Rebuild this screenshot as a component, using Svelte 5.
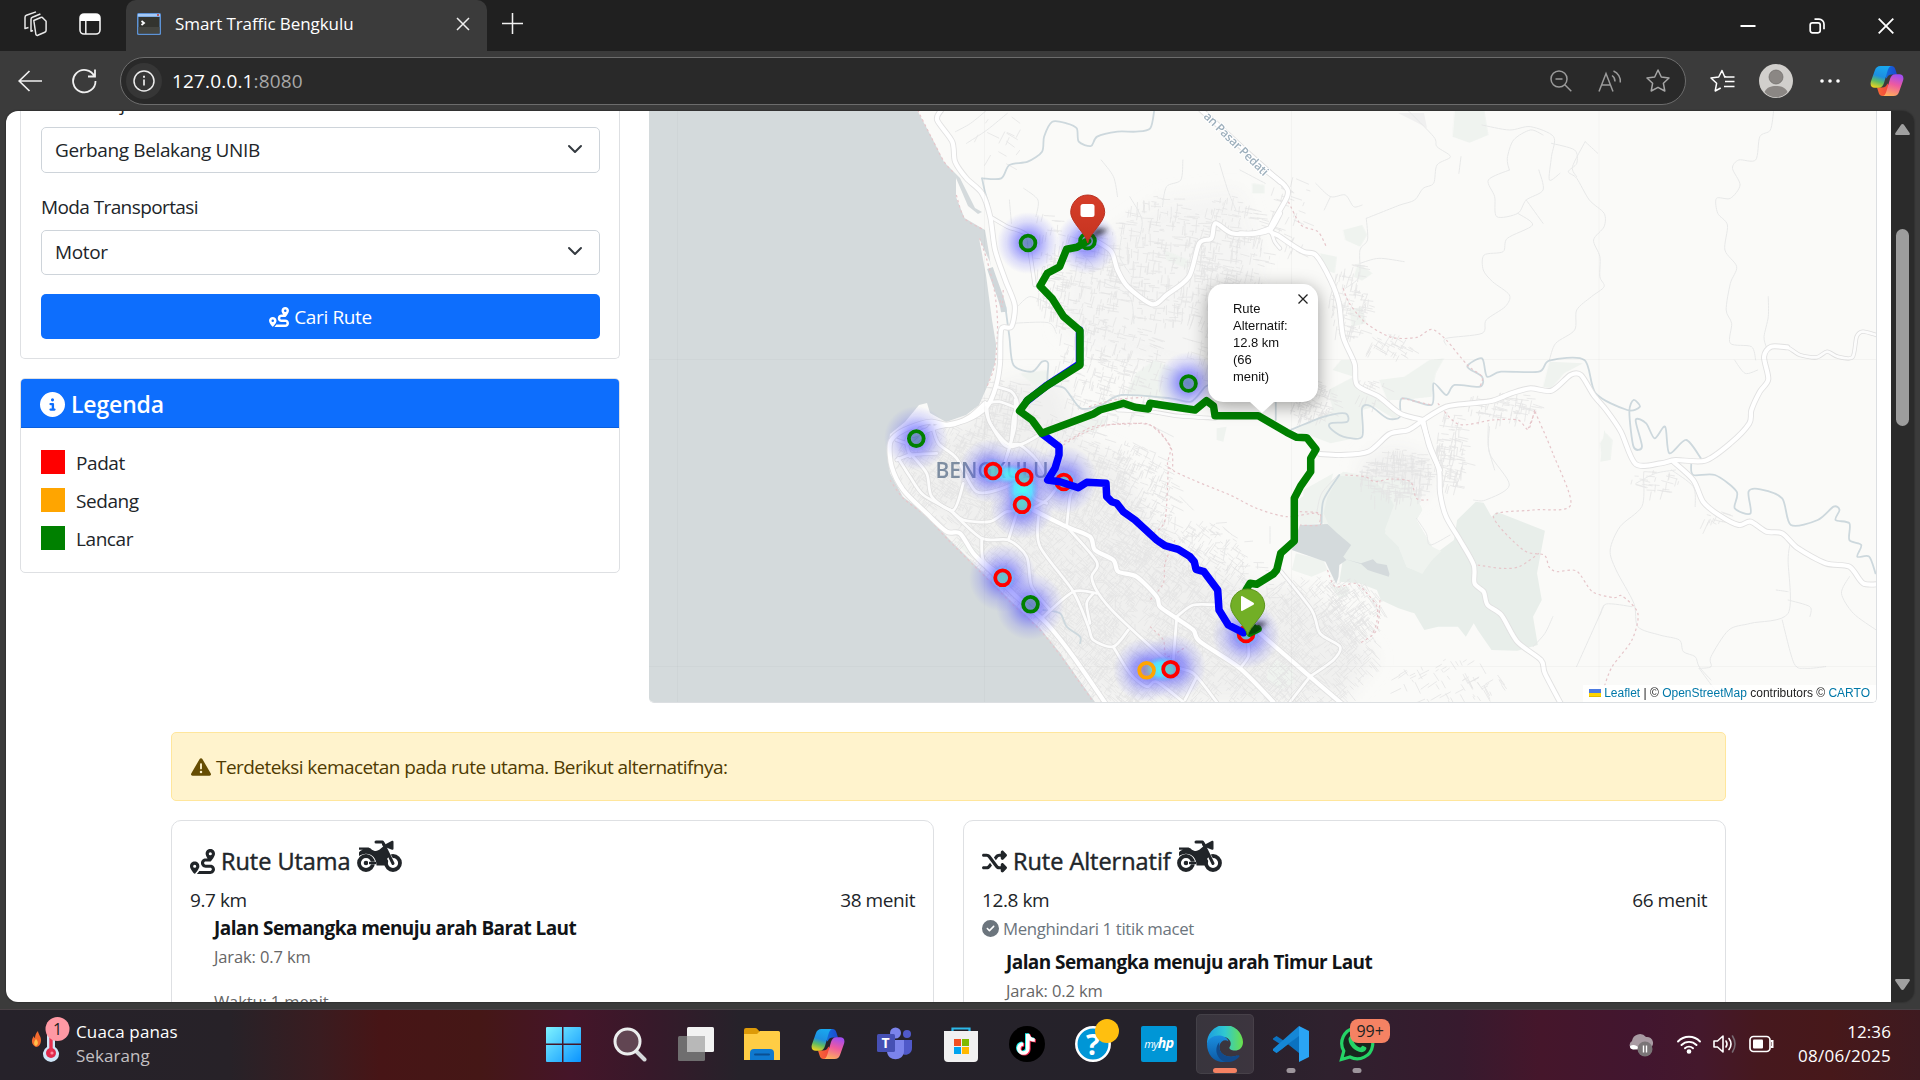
<script>
  // Deterministic generator so that the small residential streets are stable between renders.
  function rng(seed) {
    let s = seed;
    return () => {
      s = (s * 1664525 + 1013904223) % 4294967296;
      return s / 4294967296;
    };
  }

  // Area of fine streets: [centre x, centre y, radius x, radius y, angle in degrees, count]
  const districts = [
    [980, 520, 75, 75, 40, 640], [1060, 560, 90, 90, 42, 900], [1130, 620, 100, 80, 38, 900],
    [1200, 670, 120, 45, 40, 700], [1310, 640, 65, 65, 48, 700], [1030, 470, 90, 60, 20, 560],
    [940, 460, 45, 40, 30, 260], [1130, 500, 45, 60, 25, 400], [1200, 580, 50, 60, 35, 400],
    [1000, 410, 32, 32, 10, 170], [1110, 370, 55, 55, 15, 260], [1080, 285, 40, 55, 10, 260],
    [1160, 260, 55, 65, 5, 320], [1230, 250, 40, 55, 12, 200], [1230, 330, 50, 60, 15, 220],
    [1350, 300, 20, 38, 12, 110], [1395, 475, 36, 26, 5, 260], [1450, 450, 14, 40, 10, 120],
    [1500, 405, 35, 14, 12, 80], [1310, 400, 25, 20, 20, 110], [1375, 390, 20, 16, 20, 20],
    [1450, 680, 55, 22, 60, 70], [1350, 610, 32, 32, 55, 150], [1390, 345, 25, 12, 30, 40],
    [1655, 480, 25, 12, 10, 30], [1715, 517, 12, 6, 20, 18], [1290, 215, 22, 40, 20, 40],
    [1000, 150, 25, 40, 30, 14], [1045, 260, 18, 50, 8, 50], [1130, 590, 140, 85, 0, 160]
  ];

  function streets(list) {
    const r = rng(11);
    let d = '';
    for (const [cx, cy, rx, ry, ang, n] of list) {
      for (let i = 0; i < n; i++) {
        const t = r() * Math.PI * 2;
        const k = Math.sqrt(r());
        const x = cx + Math.cos(t) * rx * k;
        const y = cy + Math.sin(t) * ry * k;
        const a = ((ang + (r() > 0.5 ? 90 : 0) + (r() - 0.5) * 14) * Math.PI) / 180;
        const l = 3 + r() * 11;
        d += `M${x.toFixed(1)} ${y.toFixed(1)}l${(Math.cos(a) * l).toFixed(1)} ${(Math.sin(a) * l).toFixed(1)}`;
      }
    }
    return d;
  }
  const streetPath = streets(districts);

  // Catmull-Rom curve through "x y x y ..." points
  function curve(text) {
    const n = text.trim().split(/\s+/).map(Number);
    const p = [];
    for (let i = 0; i < n.length; i += 2) p.push([n[i], n[i + 1]]);
    let d = `M${p[0]}`;
    for (let i = 0; i < p.length - 1; i++) {
      const a = p[i - 1] ?? p[i], b = p[i], c = p[i + 1], e = p[i + 2] ?? c;
      d += `C${b[0] + (c[0] - a[0]) / 7} ${b[1] + (c[1] - a[1]) / 7} ${c[0] - (e[0] - b[0]) / 7} ${c[1] - (e[1] - b[1]) / 7} ${c[0]} ${c[1]}`;
    }
    return d;
  }

  // Map sheets: each keeps its own grid and is placed by a matrix
  const sheets = [
    {
      m: 'matrix(.40816 0 0 .33333 640 110)',
      green: ['1190 850 1215 790 1260 750 1320 780 1360 840 1340 880', '930 790 1000 780 1000 820 980 840', '1285 420 1345 450 1340 475 1290 450', '1060 930 1110 915 1150 925 1120 960 1080 970', '1500 220 1530 225 1530 250 1500 250'],
      river: ['838 205 885 205 905 165 950 155 985 125 990 80 1010 35 1045 40 1070 55 1075 95 1105 108 1120 80 1170 65 1215 65 1250 55 1260 0', '838 205 845 245 855 285', '895 590 905 680 915 765 960 785 985 755 1000 760 1000 820 1040 835 1080 895 1130 885 1180 855 1300 865 1350 875 1385 830 1400 825'],
      road: ['738 0 728 30 765 95 772 155 800 205 838 250 858 320 870 420 895 510 918 585 910 650 885 658 882 760 872 830 850 890 800 930 730 950 670 975', '1120 395 1155 425 1170 480 1195 530 1255 583 1290 555 1345 500 1370 400 1400 385 1410 340 1450 370 1510 370 1545 358 1568 310', '1375 0 1420 50 1490 130 1568 215'],
      road2: ['858 320 900 350 948 375 957 440 967 525', '872 830 910 845 925 880 915 920 908 1000 890 1070', '850 890 855 930 880 985 900 1010 940 1000 985 970', '850 880 880 875 925 895', '1170 900 1250 905 1320 918 1410 925', '1545 358 1555 395 1568 415'],
      thin: ['773 65 810 40 850 0', '800 100 850 60 900 10', '1130 150 1160 200 1170 260', '940 235 975 270 970 320', '905 270 910 340', '925 590 955 560 1000 580', '1330 150 1325 210 1290 230 1280 290', '1180 380 1175 440 1200 490', '1090 440 1110 470 1105 520', '910 640 1000 638 1020 670', '1140 520 1200 560 1210 640', '1200 260 1230 330 1220 400', '1420 160 1440 240 1460 300'],
      admin: ['680 0 715 85 745 155 770 190', '775 255 795 325 840 358', '832 385 850 450 868 540 876 640 870 760 850 830', '890 540 887 590 880 560', '1000 1000 1050 990 1110 950 1200 942 1250 945 1300 1010 1305 1080', '1100 890 1160 870 1230 862']
    },
    {
      m: 'matrix(.42092 0 0 .33333 1240 110)',
      green: ['330 810 390 800 450 750 485 745 465 790 455 860 385 870 350 870', '220 780 240 750 270 750 275 830 330 870 380 905 370 930 320 890 290 900 290 980 215 1000 130 960 220 900 210 840 270 800', '510 0 580 0 590 75 545 98 505 80', '720 830 735 755 815 760 770 790 740 835', '245 360 290 345 302 375 285 410 250 390', '280 460 315 490 290 512 270 500', '260 600 290 590 300 640 265 650', '190 430 230 440 225 490 200 480', '870 970 885 990 880 1050 860 1050 855 1000'],
      river: ['120 960 200 920 250 910 255 935 215 940 215 955 245 980 290 980 290 895 310 888 350 925 380 920 385 865 455 885 460 820 490 855 510 825 570 830 575 800 540 770 575 745 587 800 620 785 710 785 735 752 818 750 845 850 920 900 950 890 935 870 925 905 935 1010 955 1010 940 930 965 940 985 985 1010 950 1020 1030 1060 990 1095 1045', '85 860 85 930'],
      road: ['60 180 105 225 112 260 72 355 95 380 150 425 180 435 215 510 235 580 245 680 272 760 278 825 330 860 380 910 435 930', '0 370 35 370 72 355', '435 930 490 890 550 880 600 872 645 850 690 835 740 842 785 795 810 795 840 855 870 900 905 965 940 1062 1000 1060 1035 1050 1105 1052 1165 1000 1210 940 1215 900 1235 845 1255 808 1245 740 1262 710 1300 712', '435 930 400 960 355 972 305 1025 240 1035 190 1032', '435 930 450 1010 475 1080'],
      road2: ['1262 710 1300 712 1330 735 1370 742 1395 725 1420 740 1455 742 1465 680 1480 665 1512 675'],
      thin: ['398 0 460 80 468 110 500 140 468 165 460 220 435 235 415 270 380 285 330 310 300 325', '525 140 520 190', '300 325 303 390 285 420 283 500 250 535', '640 180 635 145 650 90 690 60 720 75', '575 45 640 60 690 50 745 80 740 140 735 210 760 190', '640 180 590 210 605 260 610 320 660 310 680 270 720 240 710 180', '680 270 720 340', '820 95 850 130', '740 100 795 120 800 160 780 185 800 205 830 270 865 310 865 350 840 390 855 440 855 500 865 530 835 560 800 600 795 660 750 700 735 750', '660 310 695 345 635 385 625 425 580 435 578 480 600 515 640 555 630 590 585 630 575 670 490 685 490 705', '1268 0 1260 60 1235 80 1225 150 1185 150 1170 175 1188 225 1165 265 1132 265 1135 310 1158 345 1152 420 1180 470 1165 520 1155 600 1168 640 1165 700 1215 710 1225 750', '1255 560 1255 620 1245 680 1250 710', '1175 750 1200 790 1230 780', '180 220 215 260 250 255 270 290 290 285', '215 260 200 300', '285 460 330 445 390 455', '590 940 590 1010 605 1080', '820 95 790 170 800 200', '0 180 60 220'],
      admin: ['115 275 145 345 185 365 205 410', '245 535 260 580 300 640 360 682 420 682 455 658 490 690 540 765 575 800 570 830', '385 865 455 885', '470 880 520 943 600 930 660 930 685 958 700 900']
    },
    {
      m: 'matrix(.33333 0 0 .33333 860 400)',
      green: ['1225 800 1250 780 1300 810 1300 850 1260 870 1220 840', '1070 85 1100 80 1090 125 1070 120', '280 420 340 440 360 460 330 470', '1330 270 1420 220 1400 290 1330 330'],
      river: ['550 630 600 640 620 680 660 710 660 730'],
      road: ['375 10 330 50 270 75 215 65 170 75 115 100 90 130 95 200 130 270 200 340 260 395 300 400 340 460 400 520 470 590 560 670 640 770 740 915', '520 330 620 380 690 410 705 450 760 480 775 515 830 530 890 590 900 620 950 655 1000 690 1020 725 1140 805 1240 906', '1200 700 1350 830 1450 915'],
      road2: ['375 20 390 70 440 130 480 135 530 180 570 250', '465 0 465 80 440 170', '215 70 235 130 290 175 350 275 440 260 500 220', '110 180 150 165 230 160', '115 175 150 230 190 285 270 330 310 360 390 365 440 335 500 330 560 300 600 250', '150 160 200 220 215 290 280 330 310 250', '270 330 365 415 445 420 500 470 515 560 570 630', '365 415 370 480 420 520', '535 350 540 440 640 575 685 680 700 720 760 740 805 690', '620 380 710 485 695 530 715 580 770 645 930 790 1000 820 1070 906', '550 650 640 575 710 580', '950 655 940 780', '950 650 1000 615 1075 615', '1350 830 1290 906', '1350 830 1420 780 1440 740 1380 700 1355 630 1260 510', '445 420 470 340', '620 380 630 290 640 270', '700 580 680 610 690 670', '760 740 810 820 860 860 890 845 970 906', '1140 805 1165 770 1165 730', '1010 830 975 900', '170 80 140 120 150 170', '500 220 520 290 560 310', '110 120 160 130 210 80'],
      thin: ['1230 380 1230 430', '1370 340 1385 280 1435 225', '880 80 940 110', '1100 420 1090 480', '960 290 1000 330'],
      admin: ['610 135 660 105 740 75 870 75 930 140 925 200 1000 240 1110 285 1190 325 1280 350 1370 340 1380 375 1320 375', '925 200 915 360 880 400', '945 420 915 490 910 550 870 600', '870 680 910 720 920 770 980 740', '1560 600 1550 690 1500 730', '90 240 130 295 200 350 260 415 340 495 400 555 470 625 540 690 600 765 650 835 700 906']
    },
    {
      m: 'matrix(.39541 0 0 .33333 1280 400)',
      green: ['42 300 120 250 160 215 215 225 330 245 360 330 345 360 385 440 400 470 360 520 320 500 170 470 110 370 50 375', '40 460 110 480 120 510 80 530 30 510', '130 560 175 560 170 590 150 595', '820 90 835 130 835 180 810 185'],
      forest: ['110 340 120 290 150 228 210 230 250 255 290 310 265 390 300 440 320 500 360 520 400 455 440 420 448 360 495 305 515 308 535 350 548 335 670 392 650 520 662 600 640 650 652 735 600 752 535 750 500 690 490 670 470 710 450 680 400 680 365 690 340 640 300 625 255 600 245 570 200 550 150 545 160 470'],
      light: ['245 246 330 245 360 330 345 360 385 440 408 454 375 490 360 522 320 500 300 440 265 400 290 320 265 262'],
      lake: ['50 375 120 372 145 400 180 435 160 470 168 480 150 495 148 530 142 552 125 510 115 485 30 450', '165 478 205 490 235 478 245 490 270 495 277 522 275 530 235 515 222 510 205 492'],
      river: ['1040 190 1045 225 1100 225 1155 275 1150 325 1190 340 1185 275 1215 268 1270 295 1292 375 1360 360 1400 320 1415 330 1405 360 1440 370 1440 420 1470 435 1460 470 1490 470 1506 520', '105 370 110 300 150 225'],
      road: ['360 65 380 140 402 210 405 280 420 350 455 420 490 495 492 550 515 575 525 615 560 645 600 725 660 780 670 820 712 915', '995 185 1045 240 1070 305 1110 345 1160 375 1190 365 1230 395 1270 400 1310 445 1380 490 1440 500 1475 550 1520 552'],
      road2: [],
      thin: ['1000 210 950 220 900 250', '920 240 915 320 860 380 835 450 850 510 895 610 905 680 960 705 1010 720 1020 755 1050 770 1060 800 1090 840', '990 210 1045 260 1050 320', '810 645 825 612 890 620', '750 800 820 615', '640 740 670 700 690 650', '1290 430 1285 480 1285 640 1190 670 1135 690 1090 770 1090 800 1060 805', '1285 600 1340 620 1340 650', '1270 660 1300 790 1330 805 1380 800', '1440 530 1420 580 1450 640 1508 690', '345 355 370 400 380 435 430 405', '530 80 530 160 580 255 520 300 490 300', '1060 805 1100 870', '1255 570 1285 575'],
      admin: ['645 35 690 160 735 315 640 330 540 348 615 450 668 465 680 500 700 515 750 513 790 575 845 593 865 588 905 640 890 720 840 800 820 860', '500 495 560 505 605 500 655 460', '165 225 215 230 240 245 280 237 330 245 345 295 375 300', '120 510 140 560 190 550 220 580 245 620 245 665 235 700', '645 35 628 85', '50 335 100 340 100 370']
    }
  ];

  const heat = [
    [1028, 243, 31], [1087, 243, 31], [1188, 383, 31], [916, 438, 32], [1030, 606, 34], [990, 471, 32],
    [1024, 477, 32], [1022, 507, 32], [1064, 480, 34], [1003, 578, 34], [1173, 667, 33], [1145, 670, 32], [1246, 635, 34]
  ];
  const points = [
    [1028, 243, 'green'], [1087.5, 241, 'green'], [1188.5, 383.5, 'green'], [916.3, 438.6, 'green'], [1030.5, 604.3, 'green'],
    [993, 471, 'red'], [1024.2, 477.2, 'red'], [1022, 504.8, 'red'], [1063.8, 482, 'red'], [1002.6, 577.8, 'red'],
    [1170.6, 669.2, 'red'], [1246, 634, 'red'], [1146.6, 670.3, 'orange']
  ];

  const icons = {
    route: 'M512 96c0 50.2-59.1 125.1-84.6 155c-3.8 4.4-9.4 6.1-14.5 5H320c-17.7 0-32 14.3-32 32s14.3 32 32 32h96c53 0 96 43 96 96s-43 96-96 96H139.6c8.7-9.9 19.3-22.6 30-36.8c6.3-8.4 12.8-17.6 19-27.2H416c17.7 0 32-14.3 32-32s-14.3-32-32-32H320c-53 0-96-43-96-96s43-96 96-96h39.8c-21-31.5-39.8-67.7-39.8-96c0-53 43-96 96-96s96 43 96 96zM117.1 489.1c-3.8 4.3-7.2 8.1-10.1 11.3l-1.8 2-.2-.2c-6 4.6-14.6 4-20-1.8C59.8 473 0 402.5 0 352c0-53 43-96 96-96s96 43 96 96c0 30-21.1 67-43.5 97.9c-10.7 14.7-21.7 28-30.8 38.5l-.6 .7zM128 352a32 32 0 1 0 -64 0 32 32 0 1 0 64 0zM416 128a32 32 0 1 0 0-64 32 32 0 1 0 0 64z',
    shuffle: 'M403.8 34.4c12-5 25.7-2.2 34.9 6.9l64 64c6 6 9.4 14.1 9.4 22.6s-3.4 16.6-9.4 22.6l-64 64c-9.2 9.2-22.9 11.9-34.9 6.9s-19.8-16.6-19.8-29.6V160H352c-10.1 0-19.6 4.7-25.6 12.8L284 229.3 244 176l31.2-41.6C293.3 110.2 321.8 96 352 96h32V64c0-12.9 7.8-24.6 19.8-29.6zM164 282.7L204 336l-31.2 41.6C154.7 401.8 126.2 416 96 416H32c-17.7 0-32-14.3-32-32s14.3-32 32-32H96c10.1 0 19.6-4.7 25.6-12.8L164 282.7zm274.6 188c-9.2 9.2-22.9 11.9-34.9 6.9s-19.8-16.6-19.8-29.6V416H352c-30.2 0-58.7-14.2-76.8-38.4L121.6 172.8c-6-8.1-15.5-12.8-25.6-12.8H32c-17.7 0-32-14.3-32-32s14.3-32 32-32H96c30.2 0 58.7 14.2 76.8 38.4L326.4 339.2c6 8.1 15.5 12.8 25.6 12.8h32V320c0-12.9 7.8-24.6 19.8-29.6s25.7-2.2 34.9 6.9l64 64c6 6 9.4 14.1 9.4 22.6s-3.4 16.6-9.4 22.6l-64 64z',
    check: 'M256 512A256 256 0 1 0 256 0a256 256 0 1 0 0 512zM369 209L241 337c-9.4 9.4-24.6 9.4-33.9 0l-64-64c-9.4-9.4-9.4-24.6 0-33.9s24.6-9.4 33.9 0l47 47L335 175c9.4-9.4 24.6-9.4 33.9 0s9.4 24.6 0 33.9z',
    info: 'M256 512A256 256 0 1 0 256 0a256 256 0 1 0 0 512zM216 336h24V272H216c-13.3 0-24-10.7-24-24s10.7-24 24-24h48c13.3 0 24 10.7 24 24v88h8c13.3 0 24 10.7 24 24s-10.7 24-24 24H216c-13.3 0-24-10.7-24-24s10.7-24 24-24zm40-208a32 32 0 1 1 0 64 32 32 0 1 1 0-64z',
    warn: 'M256 32c14.2 0 27.3 7.5 34.5 19.8l216 368c7.3 12.4 7.3 27.7 .2 40.1S486.3 480 472 480H40c-14.3 0-27.6-7.7-34.7-20.1s-7-27.8 .2-40.1l216-368C228.7 39.5 241.8 32 256 32zm0 128c-13.3 0-24 10.7-24 24V296c0 13.3 10.7 24 24 24s24-10.7 24-24V184c0-13.3-10.7-24-24-24zm32 224a32 32 0 1 0 -64 0 32 32 0 1 0 64 0z'
  };

  const legend = [['Padat', 'padat'], ['Sedang', 'sedang'], ['Lancar', 'lancar']];
</script>

{#snippet fa(name, cls)}
  <svg class={cls} viewBox="0 0 512 512" fill="currentColor"><path d={icons[name]} /></svg>
{/snippet}

{#snippet moto()}
  <svg class="moto" viewBox="0 0 45 32" fill="none" stroke="currentColor">
    <circle cx="9" cy="23" r="7" stroke-width="3.8" />
    <circle cx="9" cy="23" r="2.3" fill="currentColor" stroke="none" />
    <path d="M11 23h8" stroke="#fff" stroke-width="2.6" />
    <circle cx="36" cy="23" r="7" stroke-width="3.8" />
    <path d="M36 24 L26 6" stroke="#fff" stroke-width="5.4" />
    <path d="M36 23.5 L26.5 4" stroke-width="3" stroke-linecap="round" />
    <path d="M2 7.5h8.5c3 0 4 2.5 6.5 3.2 2.6.8 4.5-.4 6.5-2l3-2.5 6 10c-3 2.5-4.5 5.5-4.5 9.3h-8.5c0-8-6-12.5-12-11.5-2.5.3-3.5 1-5.5 2v-3.5c1-2 3-2.5 4-2.7H2z" fill="currentColor" stroke="none" />
    <path d="M19 2h6.5l1.5 2.5" stroke-width="3" stroke-linecap="round" stroke-linejoin="round" />
    <path d="M28 4.5 35 .8c1 0 1.5.4 1.5 1.2v6.5c0 1-.6 1.5-1.5 1.3L28 7z" fill="currentColor" stroke="none" />
    <path d="M12 23h7" stroke-width="2.4" />
  </svg>
{/snippet}

{#snippet copilot(cls, id)}
  <svg class={cls} viewBox="0 0 34 32">
    <defs>
      <linearGradient id="{id}a" x1=".5" y1="0" x2=".2" y2="1"><stop offset="0" stop-color="#19a7ee" /><stop offset=".45" stop-color="#1e8fe0" /><stop offset=".7" stop-color="#5fbb63" /><stop offset="1" stop-color="#f5d51c" /></linearGradient>
      <linearGradient id="{id}b" x1=".6" y1="0" x2=".3" y2="1"><stop offset="0" stop-color="#a24df0" /><stop offset=".45" stop-color="#ee5aa0" /><stop offset="1" stop-color="#ffb05a" /></linearGradient>
      <linearGradient id="{id}c"><stop offset="0" stop-color="#1272dc" /><stop offset="1" stop-color="#1b49d0" /></linearGradient>
      <linearGradient id="{id}d"><stop offset="0" stop-color="#f66a35" /><stop offset="1" stop-color="#f4413e" /></linearGradient>
    </defs>
    <path d="M17 1h4.5c2.2 0 3.3 1.3 3.9 3.5L27 9.5h-5c-3 0-4.5 1.5-5.3 4L14 10z" fill="url(#{id}c)" />
    <path d="M17 31h-4.5c-2.2 0-3.3-1.3-3.9-3.5L7 22.5h5c3 0 4.5-1.5 5.3-4L20 22z" fill="url(#{id}d)" />
    <path d="M10.5 1H22c-2.5 0-3.6 2-4.5 5l-3.5 12c-1 3-2.5 4.8-5.5 4.8H4.8c-3.5 0-5-2.6-3.8-6.5L4.8 5.5C5.7 2.5 7.5 1 10.5 1z" fill="url(#{id}a)" />
    <path d="M23.5 31H12c2.5 0 3.6-2 4.5-5L20 14c1-3 2.5-4.8 5.5-4.8h3.7c3.5 0 5 2.6 3.8 6.5l-3.8 10.8c-.9 3-2.7 4.5-5.7 4.5z" fill="url(#{id}b)" />
  </svg>
{/snippet}

<div class="screen">
  <header class="tabs">
    <svg class="workspaces" viewBox="0 0 26 26" fill="none" stroke="#e8e8e8" stroke-width="1.5" stroke-linejoin="round">
      <path d="M12 9.5 19 6.5c1-.4 1.800 0 2.3.8l3 3v9c0 1-.4 1.6-1.3 2l-7 3c-1 .4-2-.2-2-1.3z" transform="translate(-1.2 0)" /><path d="M10 19.5 8 20.3V8.5c0-1 .4-1.8 1.4-2.2l8-3.3" /><path d="M5.5 16.5 2 17.5V6.5c0-1 .4-1.8 1.4-2.2L13 .9" />
    </svg>
    <svg class="vtabs" viewBox="0 0 22 22"><rect x="1" y="1" width="20" height="20" rx="4" fill="none" stroke="#f2f2f2" stroke-width="1.6" /><path d="M1 8V5a4 4 0 0 1 4-4h12a4 4 0 0 1 4 4v3z" fill="#fff" /><path d="M6.800 8v13" stroke="#f2f2f2" stroke-width="1.5" /></svg>
    <div class="tab">
      <svg class="favicon" viewBox="0 0 24 22"><rect width="24" height="22" rx="1.5" fill="#5d93d6" /><rect x="1.5" y="4" width="21" height="16.5" fill="#33342f" /><path d="M1 1h22v2.5H1z" fill="#a5c9f5" /><circle cx="21" cy="2" r="1" fill="#c2392e" /><path d="m4.500 8 2.500 2-2.500 2" fill="none" stroke="#fff" stroke-width="1.800" /><path d="M1.5 14h21v6.5h-21z" fill="#444540" /></svg>
      <span>Smart Traffic Bengkulu</span>
      <svg class="tab-x" viewBox="0 0 14 14" stroke="#eee" stroke-width="1.5"><path d="m1 1 12 12M13 1 1 13" /></svg>
    </div>
    <svg class="plus" viewBox="0 0 22 22" stroke="#f2f2f2" stroke-width="1.6"><path d="M11 0v22M0 11h22" /></svg>
    <div class="controls">
      <svg viewBox="0 0 16 16" stroke="#fff" stroke-width="2"><path d="M.5 8h15" /></svg>
      <svg viewBox="0 0 16 16" fill="none" stroke="#fff" stroke-width="1.7"><rect x="1.2" y="4.8" width="10" height="10" rx="2.2" /><path d="M5.5 1.2H10a5 5 0 0 1 5 5v5" /></svg>
      <svg viewBox="0 0 16 16" stroke="#fff" stroke-width="1.8"><path d="m.7.7 14.6 14.6M15.3.7.7 15.3" /></svg>
    </div>
  </header>

  <div class="toolbar">
    <svg class="back" viewBox="0 0 24 22" fill="none" stroke="#f0f0f0" stroke-width="1.7"><path d="M24 11H1M11.5 1 1.2 11l10.3 10" /></svg>
    <svg class="reload" viewBox="0 0 26 26" fill="none" stroke="#f0f0f0" stroke-width="1.8"><path d="M23.5 8.5A11.2 11.2 0 1 0 24.5 13M24 1.5v7h-7" /></svg>
    <div class="address">
      <span class="site"><svg viewBox="0 0 22 22" fill="none" stroke="#ececec" stroke-width="1.5"><circle cx="11" cy="11" r="10" /><path d="M11 9.5v6" stroke-width="1.7" /><path d="M11 5.7v2" stroke-width="1.9" /></svg></span>
      <span class="url">127.0.0.1<em>:8080</em></span>
      <svg class="a1" viewBox="0 0 22 22" fill="none" stroke="#9b9b9b" stroke-width="1.5"><circle cx="9" cy="9" r="8" /><path d="M5.5 9h7M14.8 14.8 21.3 21.3" /></svg>
      <svg class="a2" viewBox="0 0 24 22" fill="none" stroke="#9b9b9b" stroke-width="1.5"><path d="M1 21.5 8 3.5l7 18M3.5 15h9M14 5.5a7 7 0 0 1 3 6M15.5 1a11 11 0 0 1 6.8 11.5" /></svg>
      <svg class="a3" viewBox="0 0 24 24" fill="none" stroke="#a5a5a5" stroke-width="1.5" stroke-linejoin="round"><path d="m12 1 3.3 7 7.7 1-5.6 5.3L18.8 22 12 18.3 5.2 22l1.4-7.7L1 9l7.7-1z" /></svg>
    </div>
    <svg class="fav" viewBox="0 0 25 24" fill="none" stroke="#fff" stroke-width="1.5" stroke-linejoin="round"><path d="M14.5 7.5 12 1.5 8.7 8 1 9l5.6 5.3L5.2 22l5.5-3M15 7.5l1 .5M15 12.5h9.5M14 8h10.5M14 17.5h10.5" /></svg>
    <svg class="avatar" viewBox="0 0 34 34"><circle cx="17" cy="17" r="17" fill="#d1cfcc" /><circle cx="17" cy="13" r="7" fill="#8b8784" stroke="#6f6c69" stroke-width=".7" /><path d="M5.5 28c2-4.5 6.5-6 11.5-6s9.5 1.5 11.5 6c-6 7-17 7-23 0z" fill="#8b8784" /></svg>
    <svg class="dots" viewBox="0 0 20 4" fill="#fff"><circle cx="2" cy="2" r="1.8" /><circle cx="10" cy="2" r="1.8" /><circle cx="18" cy="2" r="1.8" /></svg>
    {@render copilot('cop', 'ct')}
  </div>

  <main class="frame">
    <div class="page">
      <div class="top">
        <aside>
          <section class="card form">
            <label class="cut" for="tujuan">Lokasi Tujuan</label>
            <div class="select" id="tujuan"><span>Gerbang Belakang UNIB</span><svg viewBox="0 0 16 16"><path d="m2 5 6 6 6-6" fill="none" stroke="#343a40" stroke-width="2" stroke-linecap="round" stroke-linejoin="round" /></svg></div>
            <label class="moda" for="moda">Moda Transportasi</label>
            <div class="select" id="moda"><span>Motor</span><svg viewBox="0 0 16 16"><path d="m2 5 6 6 6-6" fill="none" stroke="#343a40" stroke-width="2" stroke-linecap="round" stroke-linejoin="round" /></svg></div>
            <button>{@render fa('route', 'i20')}<span>Cari Rute</span></button>
          </section>
          <section class="card legend">
            <h2>{@render fa('info', 'i24')}<span>Legenda</span></h2>
            <ul>
              {#each legend as [name, cls]}
                <li><i class={cls}></i><span>{name}</span></li>
              {/each}
            </ul>
          </section>
        </aside>

        <div class="map">
          <svg class="canvas" viewBox="649 111 1227 591">
            <defs>
              <radialGradient id="heat"><stop offset="0" stop-color="#3c3cff" stop-opacity=".6" /><stop offset=".35" stop-color="#4646ff" stop-opacity=".48" /><stop offset=".7" stop-color="#5a5aff" stop-opacity=".18" /><stop offset="1" stop-color="#6060ff" stop-opacity="0" /></radialGradient>
              <radialGradient id="cyan"><stop offset="0" stop-color="#48fff0" /><stop offset=".55" stop-color="#50ecff" stop-opacity=".8" /><stop offset="1" stop-color="#60a0ff" stop-opacity="0" /></radialGradient>
              <linearGradient id="redpin" x2="0" y2="1"><stop offset="0" stop-color="#d63e2a" /><stop offset="1" stop-color="#c5331f" /></linearGradient>
              <filter id="blur" x="-50%" y="-50%" width="200%" height="200%"><feGaussianBlur stdDeviation="2.5" /></filter>
              <filter id="soft" x="-30%" y="-30%" width="160%" height="160%"><feGaussianBlur stdDeviation="9" /></filter>
            </defs>
            <rect x="649" y="111" width="1227" height="591" fill="#fafaf8" />
            <g fill="#f0f0ef" filter="url(#soft)">
              <path d="M890 440 960 425 1010 380 1060 380 1080 440 1120 460 1150 520 1190 560 1240 580 1300 590 1345 620 1375 660 1340 702 1100 702 1000 580 900 490z" />
              <path d="M1070 260 1160 200 1240 190 1260 260 1250 390 1120 360 1060 330z" opacity=".5" /><ellipse cx="1395" cy="475" rx="36" ry="25" />
            </g>
            {#each sheets as s}
              <g transform={s.m}>
                {#each s.green as p}<polygon points={p} class="park" />{/each}
                {#each s.forest ?? [] as p}<polygon points={p} class="forest" />{/each}
                {#each s.light ?? [] as p}<polygon points={p} class="park" />{/each}
                {#each s.lake ?? [] as p}<polygon points={p} class="lake" />{/each}
              </g>
            {/each}
            <path d="M1398 113 1424 113 1427 128 1412 120z" fill="#f0f0f0" />
            <path d={streetPath} class="streets" />
            <path d="M649 111H917.6L932 138 944 162 950 168 960 178 966 190 975 208 982 212 978 214 968 206 956 178 956 197 964.5 218 985 230 989 253 994 290 997.5 323 995 363 987 387 979 405 966 415 946 422 930 413 927 403 919 405 905 422 890 434 888 450 890 473 903 497 927 515 947 537 973 563 993 583 1017 607 1040 628 1060 653 1077 677 1095 702H649z" fill="#d4dadc" />
            <path d="M979 238 986 275 992 320 997 350 1003 350 999 300 990 262z" fill="#fafaf8" />
            <path d="M990 268C997 290 1003 300 1004 312" fill="none" stroke="#d0d7da" stroke-width="6" />
            {#each sheets as s}
              <g transform={s.m} class="lines">
                {#each s.thin as p}<path d={curve(p)} class="thin" />{/each}
                {#each s.river as p}<path d={curve(p)} class="river" />{/each}
                {#each s.admin as p}<path d={curve(p)} class="admin" />{/each}
              </g>
            {/each}
            {#each sheets as s}
              <g transform={s.m} class="lines">
                {#each s.road2 as p}<path d={curve(p)} class="case2" />{/each}
                {#each s.road as p}<path d={curve(p)} class="case" />{/each}
              </g>
            {/each}
            {#each sheets as s}
              <g transform={s.m} class="lines">
                {#each s.road2 as p}<path d={curve(p)} class="road2" />{/each}
                {#each s.road as p}<path d={curve(p)} class="road" />{/each}
              </g>
            {/each}
            <path d="M677.5 111V702M984.5 111V702M1291.5 111V702M1599 111V702M649 359.5H1876M649 666.5H1876" stroke="#808080" stroke-opacity=".06" />
            <text x="935.5" y="477.5" class="city" textLength="113" lengthAdjust="spacingAndGlyphs">BENGKULU</text>
            <text transform="translate(1203 117) rotate(44.5)" class="street-name" textLength="85" lengthAdjust="spacing">an Pasar Pedati</text>

            {#each heat as [x, y, r]}<circle cx={x} cy={y} {r} fill="url(#heat)" />{/each}
            <g fill="url(#cyan)"><ellipse cx="1023" cy="489" rx="16" ry="24" /><ellipse cx="1009" cy="474" rx="19" ry="10" opacity=".8" /><ellipse cx="1162" cy="669" rx="20" ry="13" /><circle cx="1003" cy="578" r="13" opacity=".8" /><circle cx="993" cy="471" r="13" opacity=".8" /><circle cx="1022" cy="505" r="13" opacity=".8" /><circle cx="1064" cy="482" r="13" opacity=".7" /><circle cx="1246" cy="634" r="13" opacity=".7" /></g>
            {#each points as [x, y, c]}<circle cx={x} cy={y} r="7.4" fill={c === 'red' ? '#a06040' : c} fill-opacity=".22" stroke={c} stroke-width="3.8" />{/each}

            <g fill="none" stroke-width="7.5" stroke-linejoin="round" stroke-linecap="round">
              <path stroke="#00f" d="M1079.5 330V364L1046 386 1027 401" />
              <path stroke="#00f" d="M1042.7 434.3 1059 446.7V455L1055 468.3 1047.7 480 1060 481.7 1078.3 487.7 1086.7 482.3 1106 483.3 1106.7 496.7 1111.7 501.7 1116.7 503.3 1123.3 511.7 1135 520 1156.7 540 1165 545.7 1178.3 549.3 1190 556.7 1194.3 561.7 1196 569.3 1204 571.7 1217.7 590 1219 610 1228.3 625 1243.3 632.7" />
              <path stroke="green" d="M1087.5 241 1077 247.3 1066.5 249.3 1059.6 266.7 1047.3 273.3 1040 286 1052 298.3 1063.7 316.7 1080 330.7V365L1048 385 1027.7 400 1019.6 411 1032 420 1041.7 433.3 1093.3 414 1100 410 1123.3 403.3 1135 407.3 1148.3 409 1150 403.3 1195 410 1206.5 400.7 1213.5 406 1215 415.7H1258.3L1286.7 432.3 1296.7 437.3 1306.7 437.7 1316 449.3 1310.7 458.3V471.7L1300.7 486 1294.3 498.3V541L1280.7 553.3 1276.7 570 1273.3 574 1256.7 584.3 1250 583.3 1246 590M1250 633 1258 629" />
            </g>
            <path d="M1088 240 1104 233 1108 229 1096 228zM1249 633 1262 627 1268 622 1256 622z" fill="#202020" opacity=".75" filter="url(#blur)" />
            <path d="M1247 635l8-2 6-4-6-5z" fill="#064a06" />
            <path d="M1087.7 243c-1.5-9-17-21-17-30.5a17 17.5 0 0 1 34 0c0 9.5-15.5 21.5-17 30.5z" fill="url(#redpin)" stroke="#b93222" />
            <rect x="1080.500" y="204" width="14" height="13" rx="2.5" fill="#fff" />
            <path d="M1247.7 635.5c-1.5-9-17-20-17-29.5a17 17 0 0 1 34 0c0 9.5-15.5 20.5-17 29.5z" fill="#72af26" stroke="#5c941c" />
            <path d="M1241 597v13q0 1.5 1.5.8l11-6q1.3-1 0-2l-11-6.6q-1.5-.7-1.5.8z" fill="#fff" />
          </svg>
          <div class="popup">
            <p>Rute<br />Alternatif:<br />12.8 km<br />(66<br />menit)</p>
            <svg viewBox="0 0 10 10" stroke="#222" stroke-width="1.3"><path d="m.5.5 9 9M9.5.5l-9 9" /></svg>
            <i></i>
          </div>
          <div class="attribution"><svg viewBox="0 0 12 8"><path fill="#4C7BE1" d="M0 0h12v4H0z" /><path fill="#FFD500" d="M0 4h12v3H0z" /><path fill="#E0BC00" d="M0 7h12v1H0z" /></svg><a href="#l">Leaflet</a> | © <a href="#o">OpenStreetMap</a> contributors © <a href="#c">CARTO</a></div>
        </div>
      </div>

      <div class="results">
        <div class="alert">{@render fa('warn', 'i20')}<span>Terdeteksi kemacetan pada rute utama. Berikut alternatifnya:</span></div>
        <div class="routes">
          <article>
            <h3>{@render fa('route', 'i24')}<span>Rute Utama</span>{@render moto()}</h3>
            <div class="sum"><span>9.7 km</span><span>38 menit</span></div>
            <div class="step"><strong>Jalan Semangka menuju arah Barat Laut</strong><small>Jarak: 0.7 km</small><small class="time">Waktu: 1 menit</small></div>
          </article>
          <article>
            <h3>{@render fa('shuffle', 'i24')}<span>Rute Alternatif</span>{@render moto()}</h3>
            <div class="sum"><span>12.8 km</span><span>66 menit</span></div>
            <div class="avoid">{@render fa('check', 'i17')}<span>Menghindari 1 titik macet</span></div>
            <div class="step"><strong>Jalan Semangka menuju arah Timur Laut</strong><small>Jarak: 0.2 km</small></div>
          </article>
        </div>
      </div>
    </div>
    <div class="scroll">
      <svg viewBox="0 0 15 11"><path d="M7.5 0q1 0 1.6.9l5.5 8q1 2.1-1 2.1H1.400q-2 0-1-2.100l5.500-8Q6.500 0 7.500 0z" fill="#a0a0a0" /></svg>
      <div class="thumb"></div>
      <svg class="down" viewBox="0 0 15 11"><path d="M7.5 0q1 0 1.6.9l5.5 8q1 2.1-1 2.1H1.400q-2 0-1-2.100l5.500-8Q6.500 0 7.500 0z" fill="#a0a0a0" /></svg>
    </div>
  </main>

  <footer>
    <div class="weather">
      <svg viewBox="0 0 40 46">
        <path d="M5 31c-5-2-5-8-2-11 0 2 1 2 1 2 0-3 1-5 3-7 0 3 3 5 3 9 0 4-2 7-5 7z" fill="#f26a2e" /><path d="M5 30c-3-1-2-5 0-7 2 2 3 5 0 7z" fill="#ffc04a" />
        <path d="M16 12a4 4 0 0 1 8 0v19a8 8 0 1 1-8 0z" fill="#cfe6f8" /><circle cx="20" cy="37" r="5" fill="#e0294b" /><path d="M18.3 14h3.4v22h-3.4z" fill="#e8304f" /><circle cx="21" cy="37" r="1.6" fill="#ff8ba0" />
        <circle cx="26.5" cy="13" r="12" fill="#ff99a4" />
      </svg>
      <b>1</b>
      <div><span>Cuaca panas</span><span class="dim">Sekarang</span></div>
    </div>
    <nav>
      <div><svg viewBox="0 0 36 36"><defs><linearGradient id="win" x2="1" y2="1"><stop offset="0" stop-color="#7ff3ff" /><stop offset="1" stop-color="#0a93ff" /></linearGradient></defs><path d="M1 2q0-1 1-1h15v16.5H1zM18.5 1H35q1 0 1 1v15.5H18.5zM1 19h16v17H2q-1 0-1-1zM18.5 19H36v16q0 1-1 1H18.5z" fill="url(#win)" /></svg></div>
      <div><svg viewBox="0 0 36 36"><path d="m24 25 8.5 8.5" stroke="#d5d8da" stroke-width="4" stroke-linecap="round" /><circle cx="15.5" cy="15.5" r="12.5" fill="#614552" stroke="#eceeee" stroke-width="3" /></svg></div>
      <div><svg viewBox="0 0 36 36"><rect x="9" y="1" width="27" height="25" rx="1.5" fill="#f2f2f2" /><rect y="10" width="27" height="25" rx="1.5" fill="#737373" opacity=".95" /><path d="M9 10h18v16H9z" fill="#b8b8b8" /></svg></div>
      <div><svg viewBox="0 0 36 36"><path d="M0 4q0-2 2-2h9q1.5 0 2.5 1.2L16 6v5H0z" fill="#dd9a08" /><path d="M0 8h13l3-3h18.5Q36 5 36 6.5V34H0z" fill="#ffcd45" /><path d="M6 34V27q0-4 4-4h16q4 0 4 4v7z" fill="#0f79cf" /><path d="M11 28.5h14" stroke="#0b4f91" stroke-width="2" stroke-linecap="round" /></svg></div>
      <div>{@render copilot('tcop', 'cb')}</div>
      <div><svg viewBox="0 0 36 36"><circle cx="18.5" cy="7" r="5.5" fill="#7b83eb" /><circle cx="30" cy="8" r="4" fill="#5059c9" /><path d="M22 14h13v8c0 9-13 9-13 0z" fill="#5059c9" /><path d="M10 14h17v11c0 11-17 11-17 0z" fill="#7b83eb" /><rect y="8" width="18" height="18" rx="1.5" fill="#4650b4" /></svg><b class="tee">T</b></div>
      <div><svg viewBox="0 0 36 36"><path d="M9.5 9V2.5h17V9" fill="none" stroke="#2cb8e8" stroke-width="2.2" /><path d="M1 5h34v27q0 4-4 4H5q-4 0-4-4z" fill="#f1f1f1" /><path d="M11 13h7v7h-7z" fill="#f25022" /><path d="M19 13h7v7h-7z" fill="#7fba00" /><path d="M11 21h7v7h-7z" fill="#00a4ef" /><path d="M19 21h7v7h-7z" fill="#ffb900" /></svg></div>
      <div><svg viewBox="0 0 36 36"><circle cx="18" cy="18" r="18" fill="#000" /><g fill="none" stroke-width="3.6"><path d="M18.8 8v14.5a4.5 4.5 0 1 1-4.5-4.5M18.8 8c.5 4 3.5 6 7 6" stroke="#25f4ee" transform="translate(-1 -.8)" /><path d="M18.8 8v14.5a4.5 4.5 0 1 1-4.5-4.5M18.8 8c.5 4 3.5 6 7 6" stroke="#fe2c55" transform="translate(1 .8)" /><path d="M18.8 8v14.5a4.5 4.5 0 1 1-4.5-4.5M18.8 8c.5 4 3.5 6 7 6" stroke="#fff" /></g></svg></div>
      <div><svg viewBox="0 0 36 36"><circle cx="18" cy="18" r="16.7" fill="#0096d6" stroke="#fff" stroke-width="2.5" /></svg><b class="help">?</b><i class="dot"></i></div>
      <div><span class="hp">my<b>hp</b></span></div>
      <div class="active"><svg viewBox="0 0 36 36"><defs><linearGradient id="e1" x2="1"><stop offset="0" stop-color="#1b9de2" /><stop offset=".5" stop-color="#30c8d0" /><stop offset="1" stop-color="#6be04a" /></linearGradient><linearGradient id="e2" x2="0" y2="1"><stop offset="0" stop-color="#1a8fe0" /><stop offset="1" stop-color="#0c59a4" /></linearGradient></defs><path d="M0 18A18 18 0 0 1 36 16c0 6-4 8.5-8 8.5-4.5 0-6-2-5.5-3.2 3-3.6.5-10.3-6.5-10.3C8 11 2 14 0 18z" fill="url(#e1)" /><path d="M0 18c1-6 7-9 13-8.5 4 .3 8 3 8.5 6-3-2.5-8-1-9 4.5-1 8 8 13 18 9.5-6 9-20 8.5-26 1.5C1.5 27.5 0 23 0 18z" fill="url(#e2)" /><path d="M12.5 20c-1 8 8 13 18 9.5 2-.7 2.5.2 1.5 1.5-4.5 5.5-12 6-16 4-7-3.5-9-13-3.5-19-.5 1-.5 2 0 4z" fill="#114a8b" /></svg><u></u></div>
      <div><svg viewBox="0 0 36 36"><path d="M26 9 9 23l-5.5 4L0 24.5v-1L7 18 0 13.5v-1L3.5 10 9 13.5 26 27z" fill="#0b72c0" /><path d="M26 0v36l10-5V5z" fill="#2aa4f4" /><path d="M26 0 0 23v1.5L3.5 27 26 10z" fill="#1587d6" /></svg><s></s></div>
      <div><svg viewBox="0 0 36 36"><path d="M2.5 33.5 4.8 25A15.5 15.5 0 1 1 11 31z" fill="#18261e" stroke="#25d366" stroke-width="3.2" /><path d="M12 9.5c1-.8 2.3-.5 2.8.7l1.2 2.8c.3 1-1.5 2.4-1.2 3 1.5 2.8 3.5 4.5 6.2 5.6.8.3 2-2.2 2.9-1.8l3 1.5c1.5.9-.5 5-4.4 5-6.5-.8-12.5-6.5-13-13 0-1.5 1-3 2.5-3.800z" fill="#25d366" /></svg><s></s><em>99+</em></div>
    </nav>
    <div class="tray">
      <svg class="t1" viewBox="0 0 24 28"><path d="M4 20a5 5 0 0 1-1-9A8 8 0 0 1 17 7a6 6 0 0 1 2 12z" fill="#a99ba3" /><path d="M1 16q5-3 10 3H3q-2 0-2-3z" fill="#fff" /><circle cx="16" cy="19" r="7.5" fill="#7a7577" /><path d="M14.5 15.5v7M17.5 15.5v7" stroke="#fff" stroke-width="1.4" /></svg>
      <svg class="t2" viewBox="0 0 24 20" fill="none" stroke="#fff" stroke-width="1.9" stroke-linecap="round"><path d="M1 7.5a15 15 0 0 1 22 0M4.5 11a10.5 10.5 0 0 1 15 0M8 14.3a5.7 5.7 0 0 1 8 0" /><circle cx="12" cy="17.5" r="1.4" fill="#fff" /></svg>
      <svg class="t3" viewBox="0 0 24 20" fill="none" stroke="#fff" stroke-width="1.6" stroke-linejoin="round" stroke-linecap="round"><path d="M1 7h3.5L10 2v16l-5.5-5H1z" /><path d="M13 7q2 3 0 6M16 4.5q4 5.5 0 11" /><path d="M19.5 2q5 8 0 16" stroke="#776a72" /></svg>
      <svg class="t4" viewBox="0 0 25 18" fill="none" stroke="#fff" stroke-width="1.7"><rect x="1" y="1.5" width="20" height="15" rx="3.5" /><path d="M22 6h1.5v6H22" stroke-width="2" /><rect x="4" y="4.5" width="10" height="9" rx="1" fill="#fff" stroke="none" /></svg>
      <div class="clock"><span>12:36</span><span class="date">08/06/2025</span></div>
    </div>
  </footer>
</div>

<style>
  :global(body) { background: #202020; overflow: hidden; }
  * { box-sizing: border-box; }
  .screen { width: 1920px; height: 1080px; display: flex; flex-direction: column; background: #3b3b3b; font-family: "Open Sans", "Noto Sans", sans-serif; overflow: hidden; color: #212529; }
  svg { display: block; flex: none; }

  .tabs { height: 51px; flex: none; background: #202020; display: flex; align-items: center; }
  .workspaces { width: 26px; height: 26px; margin: 0 0 3px 23px; }
  .vtabs { width: 22px; height: 22px; margin: 0 0 3px 30px; }
  .tab { width: 361px; height: 51px; margin-left: 25px; background: #3b3b3b; border-radius: 10px 10px 0 0; display: flex; align-items: center; padding: 0 17px 4px 11px; color: #fff; font-size: 17px; letter-spacing: -.08px; }
  .favicon { width: 24px; height: 22px; margin-right: 14px; }
  .tab-x { width: 14px; height: 14px; margin-left: auto; }
  .plus { width: 21px; height: 21px; margin: 0 0 4px 15px; }
  .controls { margin-left: auto; display: flex; gap: 53px; padding: 0 26.5px 0 0; }
  .controls svg { width: 16px; height: 16px; }

  .toolbar { height: 60px; flex: none; display: flex; align-items: center; padding: 0 15px 0 18px; }
  .back { width: 24px; height: 22px; }
  .reload { width: 26px; height: 26px; margin-left: 29px; }
  .address { width: 1566px; height: 48px; margin-left: 23px; border: 1.5px solid #6c6c6c; border-radius: 24px; background: #292929; display: flex; align-items: center; padding: 0 15px 0 5px; }
  .site { width: 36px; height: 36px; border-radius: 50%; background: #363636; display: grid; place-items: center; }
  .site svg { width: 22px; height: 22px; }
  .url { margin-left: 10px; font-size: 19px; color: #fff; letter-spacing: .16px; padding-bottom: 1px; }
  .url em { font-style: normal; color: #a8a8a8; }
  .a1 { width: 22px; height: 22px; margin-left: auto; }
  .a2 { width: 24px; height: 24px; margin-left: 26px; }
  .a3 { width: 24px; height: 24px; margin-left: 24px; }
  .fav { width: 25px; height: 24px; margin-left: 24px; }
  .avatar { width: 34px; height: 34px; margin-left: 24px; }
  .dots { width: 20px; height: 4px; margin-left: 27px; }
  .cop { width: 34px; height: 32px; margin-left: 30px; }

  .frame { height: 891px; flex: none; margin: 0 6px; display: flex; border-radius: 12px; overflow: hidden; box-shadow: 0 0 2px #1c1c1c; }
  .page { width: 1885px; background: #fff; overflow: hidden; }
  .scroll { width: 23px; background: #2b2b2b; display: flex; flex-direction: column; align-items: center; padding: 13px 0 12px; }
  .scroll svg { width: 15px; height: 11px; }
  .thumb { width: 13px; height: 197px; border-radius: 7px; background: #9d9d9d; margin-top: 94px; }
  .down { margin-top: auto; transform: rotate(180deg); }

  .top { display: flex; gap: 29px; padding-left: 14px; height: 592px; }
  aside { width: 600px; flex: none; display: flex; flex-direction: column; gap: 19px; }
  .card { border: 1px solid #dee0e3; border-radius: 5px; }
  .form { height: 248px; border-top: 0; border-radius: 0 0 5px 5px; padding: 0 19px 0 20px; display: flex; flex-direction: column; font-size: 19px; letter-spacing: -.38px; }
  .cut { line-height: 30px; height: 30px; margin: -22px 0 8px; flex: none; }
  .moda { line-height: 30px; margin: 19px 0 8px; letter-spacing: -.6px; }
  .select { height: 45.5px; flex: none; border: 1px solid #ced4da; border-radius: 5px; display: flex; align-items: center; justify-content: space-between; padding: 0 16px 0 13px; }
  .select svg { width: 16px; height: 16px; margin-bottom: 2px; }
  button { margin-top: 19px; height: 45px; border: 0; border-radius: 5px; background: #0d6efd; color: #fff; font: inherit; letter-spacing: -.38px; display: flex; align-items: center; justify-content: center; gap: 5px; padding: 0; }
  .i20 { width: 20px; height: 20px; }
  .i24 { width: 25px; height: 25px; }
  .i17 { width: 17px; height: 17px; }
  .legend { height: 195px; overflow: hidden; }
  h2 { height: 49px; margin: 0; background: #0d6efd; border-bottom: 1px solid #0a5fdd; color: #fff; display: flex; align-items: center; gap: 6px; padding: 2px 19px 0; font-size: 23px; font-weight: 600; letter-spacing: -.15px; }
  ul { list-style: none; margin: 0; padding: 22px 20px; display: flex; flex-direction: column; gap: 14px; }
  li { display: flex; align-items: center; gap: 11px; height: 24px; font-size: 19px; letter-spacing: -.42px; line-height: 24px; }
  li span { padding-top: 1px; }
  li i { width: 24px; height: 24px; }
  .padat { background: #f00; }
  .sedang { background: #ffa500; }
  .lancar { background: #008000; }

  .map { position: relative; width: 1228px; height: 592px; border: solid #dcdfe2; border-width: 0 1px 1px 0; border-radius: 0 0 5px 5px; overflow: hidden; }
  .canvas { width: 1227px; height: 591px; }
  .park { fill: #eff3ef; }
  .forest { fill: #e8eeea; }
  .lake { fill: #d4dadc; }
  .streets { fill: none; stroke: #e5e5e5; stroke-width: .8; }
  .lines path { fill: none; vector-effect: non-scaling-stroke; stroke-linecap: round; stroke-linejoin: round; }
  .lines .thin { stroke: #e7e8e8; stroke-width: 1; }
  .lines .river { stroke: #cdd8dd; stroke-width: 1.8; }
  .lines .admin { stroke: #e6c6ca; stroke-width: 1.2; stroke-dasharray: 2.5 2.8; stroke-linecap: butt; }
  .lines .case { stroke: #e1e1e1; stroke-width: 6; }
  .lines .case2 { stroke: #dedede; stroke-width: 4.4; }
  .lines .road { stroke: #fff; stroke-width: 4.2; }
  .lines .road2 { stroke: #fcfcfc; stroke-width: 2.8; }
  .city { font: 600 21px "Open Sans", sans-serif; fill: #7d8da1; }
  .street-name { font: 600 12px "Open Sans", sans-serif; fill: #9dafbc; paint-order: stroke; stroke: #fff; stroke-width: 2px; }

  .popup { position: absolute; left: 559px; top: 173px; width: 110px; height: 118px; background: #fff; border-radius: 15px; box-shadow: 0 4px 18px rgba(0, 0, 0, .38); }
  .popup p { margin: 15.5px 0 0 25px; font: 13px/17.1px "Liberation Sans", Arial, sans-serif; letter-spacing: -.02px; color: #111; }
  .popup svg { position: absolute; right: 10px; top: 10px; width: 10px; height: 10px; }
  .popup i { position: absolute; left: 42px; top: 117.5px; border: solid transparent; border-width: 11px 12px 0; border-top-color: #fff; }
  .attribution { position: absolute; right: 0; bottom: 0; height: 17px; padding: 0 6px; background: rgba(255, 255, 255, .85); font: 12px/17px "Liberation Sans", Arial, sans-serif; color: #222; white-space: nowrap; }
  .attribution a { color: #0078a8; text-decoration: none; }
  .attribution svg { display: inline-block; width: 12px; height: 8px; margin-right: 3px; }

  .results { width: 1555px; margin: 29px 0 0 165px; }
  .alert { height: 69px; background: #fff3cd; border: 1px solid #ffe69c; border-radius: 5px; display: flex; align-items: center; gap: 5px; padding: 0 19px; color: #664d03; font-size: 19px; letter-spacing: -.55px; }
  .alert span { color: #4f3b02; }
  .routes { display: grid; grid-template-columns: 763px 763px; gap: 29px; margin-top: 19px; }
  article { height: 260px; border: 1px solid #dee0e3; border-radius: 10px; padding: 18px 18px; }
  h3 { display: flex; align-items: center; height: 44px; margin: 0; font-size: 23.5px; font-weight: 500; letter-spacing: -.04px; gap: 6px; }
  h3 span { -webkit-text-stroke: .45px #212529; }
  .moto { width: 45px; height: 32px; margin-bottom: 10px; }
  .sum { display: flex; justify-content: space-between; height: 30px; line-height: 30px; font-size: 19px; letter-spacing: -.42px; margin-top: 2px; }
  .step { display: flex; flex-direction: column; padding-left: 24px; }
  .step strong { font-size: 19px; font-weight: 700; line-height: 27.5px; letter-spacing: -.57px; color: #111417; }
  small { font-size: 16.5px; line-height: 27px; color: #666; letter-spacing: -.12px; }
  .time { margin-top: 18px; }
  .avoid { display: flex; align-items: center; height: 27px; gap: 4px; margin-bottom: 7px; font-size: 16.8px; color: #6c757d; letter-spacing: -.35px; }

  footer { height: 71px; margin-top: auto; position: relative; border-top: 1px solid #4a4146; background: linear-gradient(90deg, #26222a 0, #272228 230px, #3a1c20 320px, #471516 380px, #451716 480px, #451529 570px, #37192a 650px, #26222a 740px, #25222a 1190px, #2f212e 1330px, #371a2e 1460px, #45162b 1540px, #42162f 1640px, #44182c 1700px, #46181e 1760px, #47181a 1830px, #3e1a20 1920px); display: flex; }
  .weather { width: 529.5px; display: flex; position: relative; padding: 6px 0 0 31px; color: #fff; }
  .weather svg { width: 40px; height: 46px; }
  .weather > b { position: absolute; left: 53px; top: 8px; font-weight: 400; font-size: 16px; line-height: 22px; color: #222; }
  .weather div { display: flex; flex-direction: column; font-size: 17px; line-height: 24px; letter-spacing: .13px; padding: 4px 0 0 5px; }
  .weather .dim { color: #c4c0c3; letter-spacing: .05px; }
  nav { display: flex; }
  nav > div { width: 66.1px; height: 60px; margin-top: 4px; display: flex; align-items: center; justify-content: center; position: relative; }
  nav > div:first-child { margin-right: 1.5px; }
  nav svg { width: 36px; height: 36px; }
  nav .tcop { width: 34px; height: 32px; }
  nav .active::before { content: ""; position: absolute; inset: 0 4px; border-radius: 5px; background: rgba(255, 255, 255, .09); border: 1px solid rgba(255, 255, 255, .06); }
  nav .active svg { position: relative; }
  nav u, nav s { position: absolute; bottom: 1px; left: 50%; height: 5px; border-radius: 3px; transform: translateX(-50%); }
  nav u { width: 24px; background: #f58263; }
  nav s { width: 9px; background: #9d959c; }
  .tee { position: absolute; left: 20px; top: 20px; color: #fff; font-size: 14px; line-height: 18px; }
  .help { position: absolute; inset: 14px 0 0; text-align: center; color: #fff; font-size: 29px; line-height: 32px; }
  .dot { position: absolute; right: 7px; top: 5px; width: 24px; height: 24px; border-radius: 50%; background: #ffbf0f; }
  .hp { width: 36px; height: 36px; background: #0096d6; border-radius: 2px; color: #fff; font-size: 11px; font-style: italic; line-height: 34px; text-align: center; letter-spacing: -.6px; }
  .hp b { font-size: 14px; }
  nav em { position: absolute; left: 26px; top: 5px; width: 40px; height: 24px; border-radius: 8px; background: #f58263; color: #222; font: 16px/24px "Open Sans", sans-serif; text-align: center; }
  .tray { margin-left: auto; display: flex; align-items: center; padding: 0 29px 3px 0; }
  .t1 { width: 24px; height: 28px; margin-right: 24px; }
  .t2 { width: 24px; height: 20px; margin-right: 12px; }
  .t3 { width: 24px; height: 20px; margin-right: 12px; }
  .t4 { width: 25px; height: 18px; }
  .clock { width: 117px; display: flex; flex-direction: column; align-items: flex-end; color: #fff; font-size: 17px; line-height: 24px; letter-spacing: .1px; }
  .date { letter-spacing: .28px; }
</style>
